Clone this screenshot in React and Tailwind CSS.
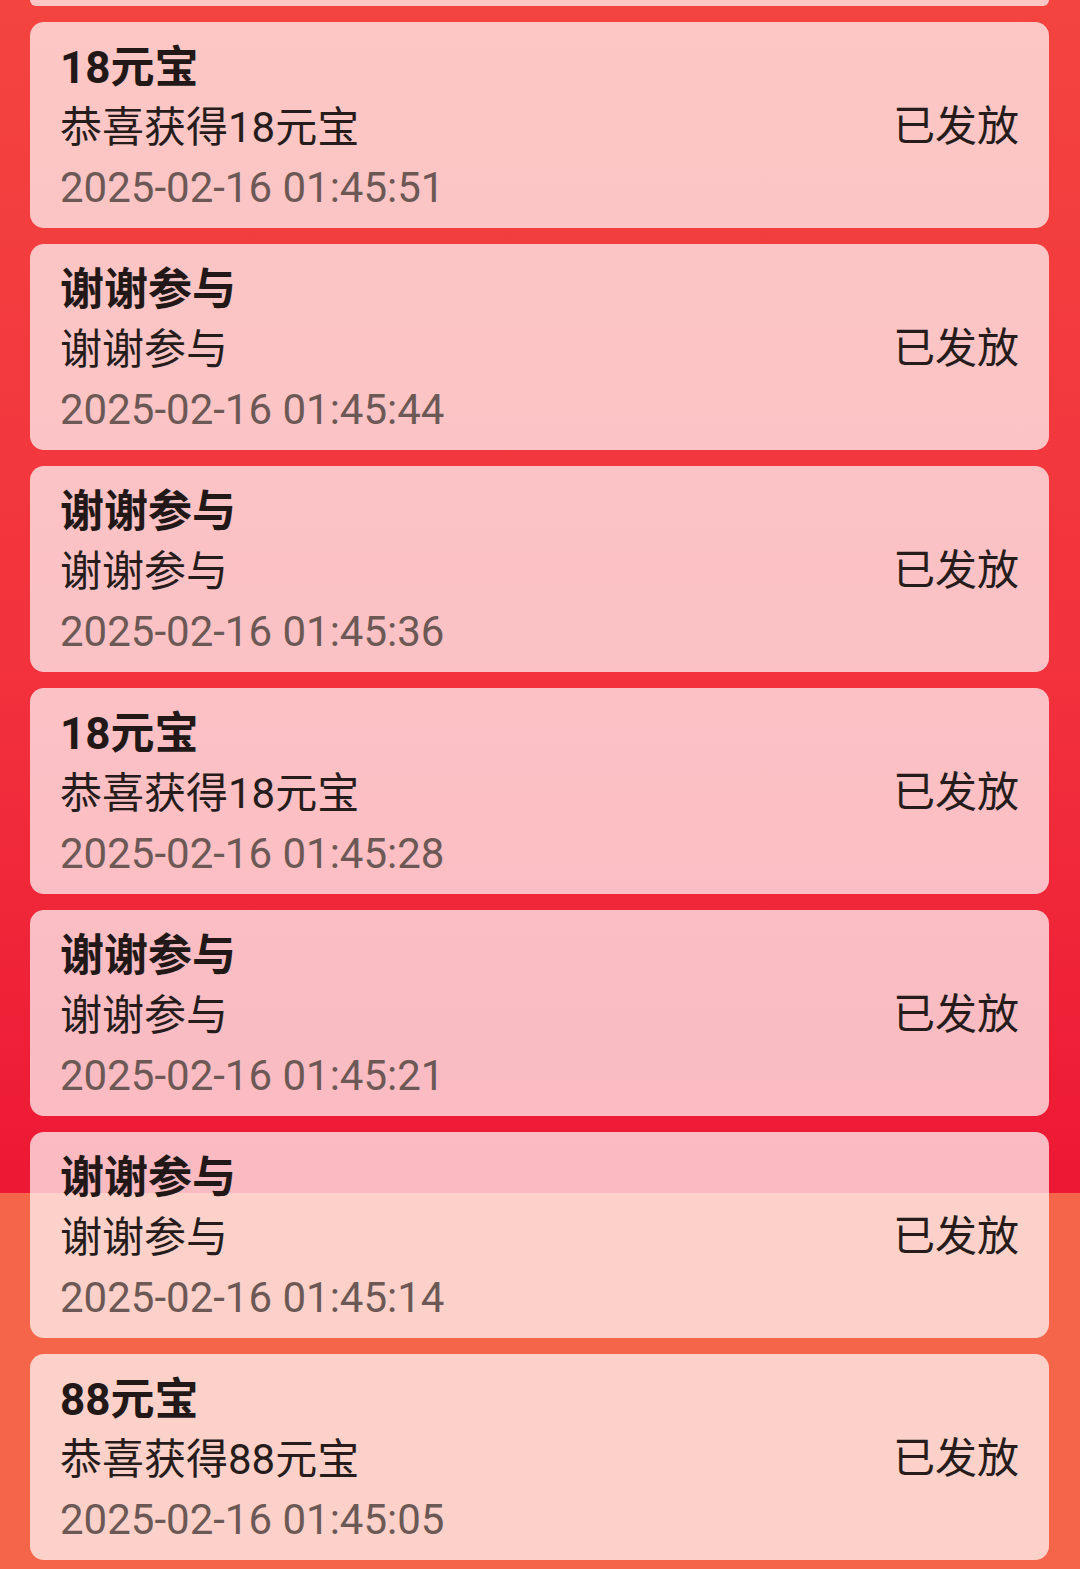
import React from "react";

const items = [
  { title: "18元宝", sub: "恭喜获得18元宝", time: "2025-02-16 01:45:51" },
  { title: "谢谢参与", sub: "谢谢参与", time: "2025-02-16 01:45:44" },
  { title: "谢谢参与", sub: "谢谢参与", time: "2025-02-16 01:45:36" },
  { title: "18元宝", sub: "恭喜获得18元宝", time: "2025-02-16 01:45:28" },
  { title: "谢谢参与", sub: "谢谢参与", time: "2025-02-16 01:45:21" },
  { title: "谢谢参与", sub: "谢谢参与", time: "2025-02-16 01:45:14" },
  { title: "88元宝", sub: "恭喜获得88元宝", time: "2025-02-16 01:45:05" },
];

export default function App() {
  return (
    <div
      className="w-[1080px] h-[1569px] overflow-hidden bg-[linear-gradient(to_bottom,#f3443f_0px,#f2323d_660px,#ed1834_1193px,#f5654a_1193px,#f5654a_100%)] pl-[30px] pr-[31px] flex flex-col gap-[16px]"
      style={{ fontFamily: '"Roboto", "Noto Sans CJK SC", sans-serif' }}
    >
      <div className="h-[6px] shrink-0 rounded-b-[14px] bg-white/70" />
      {items.map((it, i) => (
        <div
          key={i}
          className="h-[206px] shrink-0 rounded-[14px] bg-white/70 pl-[30px] pr-[30px] pt-[16px] flex items-center justify-between"
        >
          <div className="flex flex-col self-start">
            <div className="text-[44px] leading-[60px] font-bold text-[#221818]">{it.title}</div>
            <div className="text-[42px] leading-[60px] text-[#261c1c]">{it.sub}</div>
            <div className="text-[42px] leading-[60px] text-[#6c5855]">{it.time}</div>
          </div>
          <div className="text-[42px] leading-[60px] text-[#261c1c] -mt-[12px]">已发放</div>
        </div>
      ))}
    </div>
  );
}
